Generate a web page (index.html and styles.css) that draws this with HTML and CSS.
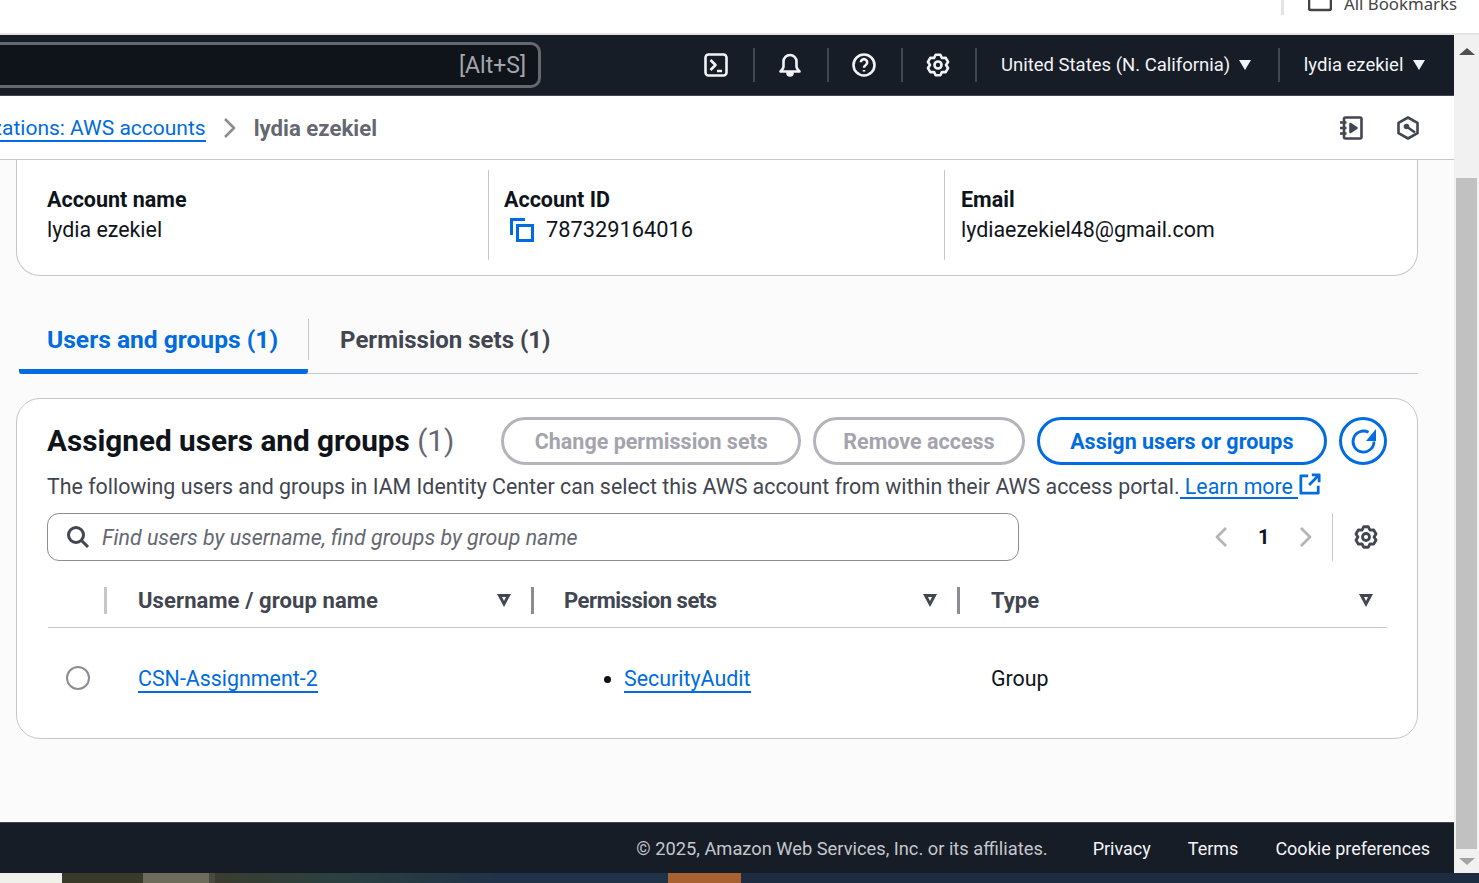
FILE: index.html
```html
<!DOCTYPE html>
<html lang="en">
<head>
    <meta charset="UTF-8">
    <title>lydia ezekiel - AWS accounts</title>
    <link rel="stylesheet" href="styles.css">
</head>
<body>

    <svg class="sprites" width="0" height="0">
        <symbol id="gear" viewBox="0 0 24 24">
            <path d="M9.64 1.77L14.36 1.77L16 5.07L19.68 4.84L22.04 8.93L20 12L22.04 15.07L19.68 19.16L16 18.93L14.36 22.23L9.64 22.23L8 18.93L4.32 19.16L1.96 15.07L4 12L1.96 8.93L4.32 4.84L8 5.07Z" />
            <circle cx="12" cy="12" r="3.5" />
        </symbol>
    </svg>

    <!-- Browser bookmarks strip -->
    <div class="bookmarks">
        <svg class="folder" viewBox="0 0 24 24"><rect x="1" y="-8" width="22" height="18" rx="2" /></svg>
        <span class="bookmarks-label">All Bookmarks</span>
    </div>

    <div class="window">
        <div class="page">
            <!-- Top navigation -->
            <header class="topnav">
                <div class="search-box"><span>[Alt+S]</span></div>
                <div class="nav-item icon-item">
                    <svg class="icon" viewBox="0 0 24 24"><rect x="1.5" y="1.5" width="21" height="21" rx="3" /><path d="M6.5 7l5 5-5 5M13 18h5" /></svg>
                </div>
                <div class="nav-item icon-item">
                    <svg class="icon" viewBox="0 0 24 24"><path d="M12 2a6.5 6.5 0 0 0-6.500 6.500v5c0 2-1.500 3.500-3 5h19c-1.500-1.500-3-3-3-5v-5A6.500 6.500 0 0 0 12 2z" /><path class="solid" d="M9.500 20h5a2.500 2.500 0 0 1-5 0z" /></svg>
                </div>
                <div class="nav-item icon-item">
                    <svg class="icon" viewBox="0 0 24 24"><circle cx="12" cy="12" r="10.500" /><path d="M8.800 9.300a3.200 3.200 0 1 1 5 2.700c-1.200.8-1.800 1.400-1.800 2.800M12 17v1.500" /></svg>
                </div>
                <div class="nav-item icon-item">
                    <svg class="icon" viewBox="0 0 24 24"><use href="#gear" /></svg>
                </div>
                <div class="nav-item menu-item">United States (N. California) <i class="caret"></i></div>
                <div class="nav-item menu-item last">lydia ezekiel <i class="caret"></i></div>
            </header>

            <!-- Breadcrumbs -->
            <div class="crumbbar">
                <div class="crumbs">
                    <a href="#" class="crumb-link">AWS Organizations: AWS accounts</a>
                    <svg class="crumb-arrow" viewBox="0 0 16 24"><path d="M3 3l9 9-9 9" /></svg>
                    <span class="crumb-current">lydia ezekiel</span>
                </div>
                <div class="tools">
                    <svg class="tool-icon" viewBox="0 0 24 24"><rect x="5" y="1.500" width="17.500" height="21" rx="1.500" /><path d="M1 6.500h6.500M1 12h6.500M1 17.500h6.500" /><path class="solid" d="M11.500 8l6 4-6 4z" /></svg>
                    <svg class="tool-icon" viewBox="0 0 24 24"><path d="M12 1.500l9.500 5.300v10.400L12 22.500l-9.500-5.300V6.800z" /><circle class="solid" cx="10.500" cy="10.500" r="1.500" /><path d="M10.500 10.500L19 16.500" /></svg>
                </div>
            </div>

            <main class="content">
                <section class="summary">
                    <div class="summary-col">
                        <div class="summary-label">Account name</div>
                        <div>lydia ezekiel</div>
                    </div>
                    <div class="summary-col">
                        <div class="summary-label">Account ID</div>
                        <div class="copy-row">
                            <svg class="copy-icon" viewBox="0 0 24 24"><path d="M15 1.500H1.500V17" /><rect x="7.500" y="7.500" width="15" height="15" /></svg>
                            787329164016
                        </div>
                    </div>
                    <div class="summary-col">
                        <div class="summary-label">Email</div>
                        <div>lydiaezekiel48@gmail.com</div>
                    </div>
                </section>

                <nav class="tabs">
                    <a href="#" class="tab active"><span>Users and groups (1)</span></a>
                    <a href="#" class="tab"><span>Permission sets (1)</span></a>
                </nav>

                <section class="card">
                    <div class="card-head">
                        <h2>Assigned users and groups <span class="count">(1)</span></h2>
                        <div class="actions">
                            <button class="btn" disabled>Change permission sets</button>
                            <button class="btn tight" disabled>Remove access</button>
                            <button class="btn primary">Assign users or groups</button>
                            <button class="btn round">
                                <svg viewBox="0 0 27 27"><path d="M18.500 4.300A10.500 10.500 0 1 0 24 13.500" /><path class="arrowhead" d="M26 1v12H16z" /></svg>
                            </button>
                        </div>
                    </div>
                    <p class="card-desc">The following users and groups in IAM Identity Center can select this AWS account from within their AWS access portal.<a href="#" class="learn"> Learn more </a>
                        <svg class="ext-icon" viewBox="0 0 24 24"><path d="M10 3H2v19h19v-8M14 2h8v8M22 2L11 13" /></svg>
                    </p>

                    <div class="filter-row">
                        <div class="filter">
                            <svg class="search-icon" viewBox="0 0 24 24"><circle cx="10" cy="10" r="7.500" /><path d="M15.500 15.500L22 22" /></svg>
                            <span>Find users by username, find groups by group name</span>
                        </div>
                        <div class="pager">
                            <svg class="chev" viewBox="0 0 16 24"><path d="M13 3l-9 9 9 9" /></svg>
                            <b>1</b>
                            <svg class="chev" viewBox="0 0 16 24"><path d="M3 3l9 9-9 9" /></svg>
                        </div>
                        <div class="prefs">
                            <svg class="icon dark" viewBox="0 0 24 24"><use href="#gear" /></svg>
                        </div>
                    </div>

                    <div class="table-head">
                        <div></div>
                        <div class="th first">Username / group name <i class="sort"></i></div>
                        <div class="th condensed">Permission sets <i class="sort"></i></div>
                        <div class="th">Type <i class="sort"></i></div>
                    </div>
                    <div class="table-row">
                        <div class="radio-cell"><span class="radio"></span></div>
                        <div class="td"><a href="#" class="link">CSN-Assignment-2</a></div>
                        <div class="td"><ul class="sets"><li><a href="#" class="link">SecurityAudit</a></li></ul></div>
                        <div class="td">Group</div>
                    </div>
                </section>
            </main>

            <footer class="footer">
                <span class="copyright">© 2025, Amazon Web Services, Inc. or its affiliates.</span>
                <a href="#">Privacy</a>
                <a href="#">Terms</a>
                <a href="#">Cookie preferences</a>
            </footer>
        </div>

        <!-- Browser scrollbar -->
        <div class="scrollbar">
            <i class="arrow-up"></i>
            <div class="thumb"></div>
            <i class="arrow-down"></i>
        </div>
    </div>

    <div class="desktop"></div>

</body>
</html>
```

FILE: styles.css
```css
:root {
    --nav-color: #161d26;
    --text-color: #0f141a;
    --muted-color: #424650;
    --link-color: #006ce0;
    --line-color: #c6c6cd;
    --disabled-color: #b4b4bb;
}
* {
    box-sizing: border-box;
}
html, body {
    height: 100%;
}
body {
    margin: 0;
    height: 883px;
    display: flex;
    flex-direction: column;
    overflow: hidden;
    font-family: Roboto, Arial, sans-serif;
    font-size: 21.4px;
    color: var(--text-color);
    background: #fff;
}
a {
    text-decoration: none;
}
svg {
    fill: none;
    stroke: currentColor;
    stroke-width: 2.6;
    stroke-linejoin: round;
    flex: none;
}
svg .solid {
    fill: currentColor;
}
svg .arrowhead {
    fill: currentColor;
    stroke: none;
}
.sprites {
    display: block;
    position: absolute;
}
/* Bookmarks */
.bookmarks {
    height: 35px;
    flex: none;
    display: flex;
    justify-content: flex-end;
    align-items: flex-start;
    padding-right: 22px;
    border-bottom: 2px solid #e4e4e4;
    overflow: hidden;
    color: #444;
}
.bookmarks::before {
    content: "";
    width: 3px;
    height: 15px;
    background: #e4e4e4;
    margin-right: 24px;
}
.folder {
    width: 24px;
    height: 24px;
    margin-right: 12px;
}
.bookmarks-label {
    font-family: "Noto Sans", Arial, sans-serif;
    font-size: 16.8px;
    line-height: 20px;
    margin-top: -6px;
}
.window {
    flex: 1;
    min-height: 0;
    display: flex;
}
.page {
    flex: 1;
    min-width: 0;
    display: flex;
    flex-direction: column;
}
/* Top nav */
.topnav {
    height: 61px;
    flex: none;
    display: flex;
    justify-content: flex-end;
    align-items: center;
    background: var(--nav-color);
    color: #f3f3f7;
    border-bottom: 1px solid #424650;
    font-size: 18.5px;
    overflow: hidden;
}
.search-box {
    flex: none;
    width: 900px;
    height: 46px;
    margin-right: 138px;
    display: flex;
    justify-content: flex-end;
    align-items: center;
    padding-right: 12px;
    background: var(--text-color);
    border: 3px solid #656871;
    border-radius: 10px;
    color: #a4a4ad;
    font-size: 23px;
}
.nav-item {
    flex: none;
    display: flex;
    align-items: center;
    height: 34px;
    border-left: 2px solid #424650;
}
.icon-item {
    width: 74px;
    justify-content: center;
    padding-right: 2px;
}
.search-box + .nav-item {
    border-left: 0;
    padding-right: 0;
}
.icon {
    width: 24px;
    height: 24px;
}
.menu-item {
    padding: 0 27px 0 24px;
    white-space: pre;
}
.menu-item.last {
    padding-right: 29px;
}
.menu-item.last .caret {
    margin-left: 5px;
}
.caret {
    width: 0;
    height: 0;
    margin-left: 4px;
    border-left: 6.5px solid transparent;
    border-right: 6.5px solid transparent;
    border-top: 10px solid #f3f3f7;
}
/* Breadcrumbs */
.crumbbar {
    height: 64px;
    flex: none;
    display: flex;
    justify-content: space-between;
    align-items: center;
    border-bottom: 1px solid var(--line-color);
    padding-top: 1px;
    padding-right: 34px;
    overflow: hidden;
}
.crumbs {
    flex: none;
    width: 377px;
    display: flex;
    justify-content: flex-end;
    align-items: center;
    white-space: nowrap;
}
.crumb-link {
    color: var(--link-color);
    border-bottom: 2px solid var(--link-color);
    font-size: 21px;
    padding-top: 3px;
    line-height: 23px;
}
.crumb-arrow {
    width: 16px;
    height: 24px;
    margin: 0 16px;
    color: #8c8c94;
}
.crumb-current {
    font-size: 22.2px;
    font-weight: 700;
    color: #656871;
}
.tools {
    display: flex;
    gap: 33px;
    color: var(--muted-color);
}
.tool-icon {
    width: 24px;
    height: 24px;
}
/* Content */
.content {
    flex: 1;
    min-height: 0;
    background: #fbfbfb;
    padding-right: 36px;
    padding-left: 16px;
    overflow: hidden;
}
.summary {
    height: 116px;
    display: grid;
    grid-template-columns: 471px 456px 1fr;
    padding-top: 10px;
    padding-bottom: 15px;
    background: #fff;
    border: 1px solid var(--line-color);
    border-top: 0;
    border-radius: 0 0 24px 24px;
}
.summary-col {
    padding: 15px 15px 0;
    line-height: 30px;
    border-left: 1px solid var(--line-color);
}
.summary-col:first-child {
    border-left: 0;
    padding-left: 30px;
}
.summary-col:last-child {
    padding-left: 16px;
}
.summary-label {
    font-size: 21.5px;
    font-weight: 700;
}
.copy-row {
    display: flex;
    align-items: center;
    gap: 12px;
    padding-left: 6px;
    font-size: 21.8px;
}
.copy-icon {
    width: 24px;
    height: 24px;
    color: var(--link-color);
    stroke-width: 3;
    stroke-linejoin: miter;
}
/* Tabs */
.tabs {
    margin: 43px 0 0 3px;
    height: 55px;
    display: flex;
    border-bottom: 1px solid var(--line-color);
    font-size: 24px;
    font-weight: 700;
}
.tab {
    height: 55px;
    color: var(--muted-color);
    display: flex;
    padding-bottom: 13px;
}
.tab span {
    display: flex;
    align-items: center;
    height: 41px;
    padding: 0 30px 0 28px;
}
.tab + .tab span {
    border-left: 1px solid var(--line-color);
    padding-left: 31px;
}
.tab.active {
    color: var(--link-color);
    border-bottom: 5px solid var(--link-color);
    border-radius: 0 0 3px 3px;
    padding-bottom: 8px;
    font-size: 24.6px;
}
/* Card */
.card {
    height: 341px;
    margin-top: 24px;
    background: #fff;
    border: 1px solid var(--line-color);
    border-radius: 24px;
    padding: 18px 30px 0;
}
.card-head {
    display: flex;
    justify-content: space-between;
    align-items: center;
    height: 48px;
}
.card-head h2 {
    margin: 0 0 2px;
    font-size: 29.7px;
    font-weight: 700;
    white-space: nowrap;
}
.count {
    font-weight: 400;
    color: #656871;
}
.actions {
    display: flex;
    gap: 12px;
}
.btn {
    height: 48px;
    padding: 0 30.5px;
    font: 700 21.5px Roboto, Arial, sans-serif;
    background: #fff;
    color: #a4a4ad;
    border: 3px solid var(--disabled-color);
    border-radius: 24px;
    white-space: nowrap;
}
.btn.tight {
    padding: 0 27px;
}
.btn.primary {
    color: var(--link-color);
    border-color: var(--link-color);
}
.btn.round {
    width: 48px;
    padding: 0;
    color: var(--link-color);
    border-color: var(--link-color);
    display: flex;
    align-items: center;
    justify-content: center;
}
.btn.round svg {
    width: 27px;
    height: 27px;
    stroke-width: 2.8;
}
.card-desc {
    margin: 7px 0 0;
    height: 30px;
    font-size: 21.36px;
    line-height: 30px;
    color: var(--muted-color);
    display: flex;
    white-space: pre;
}
.learn {
    color: var(--link-color);
    border-bottom: 2px solid var(--link-color);
    height: 27px;
}
.ext-icon {
    width: 22px;
    height: 22px;
    margin-top: 1px;
    margin-left: 1px;
    color: var(--link-color);
    stroke-width: 3;
}
.filter-row {
    display: flex;
    align-items: center;
    margin-top: 11px;
    height: 48px;
}
.filter {
    width: 972px;
    height: 48px;
    display: flex;
    align-items: center;
    gap: 12px;
    padding-left: 18px;
    background: #fff;
    border: 1px solid #8c8c94;
    border-radius: 12px;
    font-style: italic;
    color: #656871;
}
.search-icon {
    width: 24px;
    height: 24px;
    color: var(--muted-color);
    stroke-width: 3;
}
.pager {
    display: flex;
    align-items: center;
    gap: 29px;
    margin-left: 194px;
    height: 48px;
}
.pager b {
    font-size: 20px;
}
.chev {
    width: 16px;
    height: 24px;
    color: var(--disabled-color);
    stroke-width: 2.8;
}
.prefs {
    margin-left: 18px;
    height: 48px;
    width: 54px;
    display: flex;
    justify-content: flex-end;
    align-items: center;
    padding-right: 8px;
    border-left: 1px solid var(--line-color);
}
.icon.dark {
    color: var(--muted-color);
    stroke-width: 2.8;
}
/* Table */
.table-head, .table-row {
    display: grid;
    grid-template-columns: 56px 427px 426px 1fr;
    margin-left: 1px;
}
.table-head {
    height: 67px;
    padding-top: 26px;
    padding-bottom: 14px;
    border-bottom: 1px solid var(--line-color);
}
.th {
    height: 27px;
    display: flex;
    align-items: center;
    justify-content: space-between;
    padding: 0 20px 0 31px;
    border-left: 3px solid #8c8c94;
    font-size: 22px;
    font-weight: 700;
    color: var(--muted-color);
}
.th.first {
    border-left-color: var(--line-color);
    letter-spacing: 0.1px;
}
.th.condensed {
    padding-left: 30px;
    letter-spacing: -0.45px;
}
.th:last-child {
    padding-right: 14px;
}
.sort {
    width: 0;
    height: 0;
    border-left: 7.5px solid transparent;
    border-right: 7.5px solid transparent;
    border-top: 13px solid var(--muted-color);
    position: relative;
}
.sort::after {
    content: "";
    position: absolute;
    top: -10.5px;
    left: -2.5px;
    border-left: 2.5px solid transparent;
    border-right: 2.5px solid transparent;
    border-top: 4px solid #fff;
}
.table-row {
    height: 100px;
    align-items: center;
}
.radio-cell {
    padding-left: 18px;
    display: flex;
}
.radio {
    width: 24px;
    height: 24px;
    border: 2px solid #8c8c94;
    border-radius: 50%;
}
.td {
    padding-left: 34px;
}
.link {
    color: var(--link-color);
    border-bottom: 2px solid var(--link-color);
}
.sets {
    margin: 0;
    padding-left: 59px;
}
/* Footer */
.footer {
    height: 51px;
    flex: none;
    display: flex;
    justify-content: flex-end;
    align-items: center;
    gap: 37px;
    padding-right: 24px;
    background: var(--nav-color);
    border-top: 1px solid #424650;
    font-size: 18.3px;
    color: #c6c6cd;
}
.footer a {
    font-size: 18px;
    color: #f3f3f7;
}
.copyright {
    margin-right: 8px;
}
/* Scrollbar */
.scrollbar {
    width: 25px;
    flex: none;
    display: flex;
    flex-direction: column;
    align-items: center;
    background: #f1f1f1;
}
.arrow-up, .arrow-down {
    width: 0;
    height: 0;
    border-left: 8px solid transparent;
    border-right: 8px solid transparent;
}
.arrow-up {
    margin-top: 13px;
    border-bottom: 7px solid #505050;
}
.thumb {
    width: 21px;
    height: 671px;
    margin-top: 123px;
    background: #c1c1c1;
}
.arrow-down {
    margin-top: 9px;
    border-top: 7px solid #a3a3a3;
}
/* Desktop strip under the window */
.desktop {
    height: 10px;
    flex: none;
    background: linear-gradient(90deg, #f1f1ec 0 62px, #3a3a28 62px 143px, #6d6c5a 143px 209px, #4a4a40 209px 215px, #3a3c2e 215px, #2a4040 340px, #203248 500px, #203248 668px, #a86232 668px 741px, #1d2c40 741px);
}
```
